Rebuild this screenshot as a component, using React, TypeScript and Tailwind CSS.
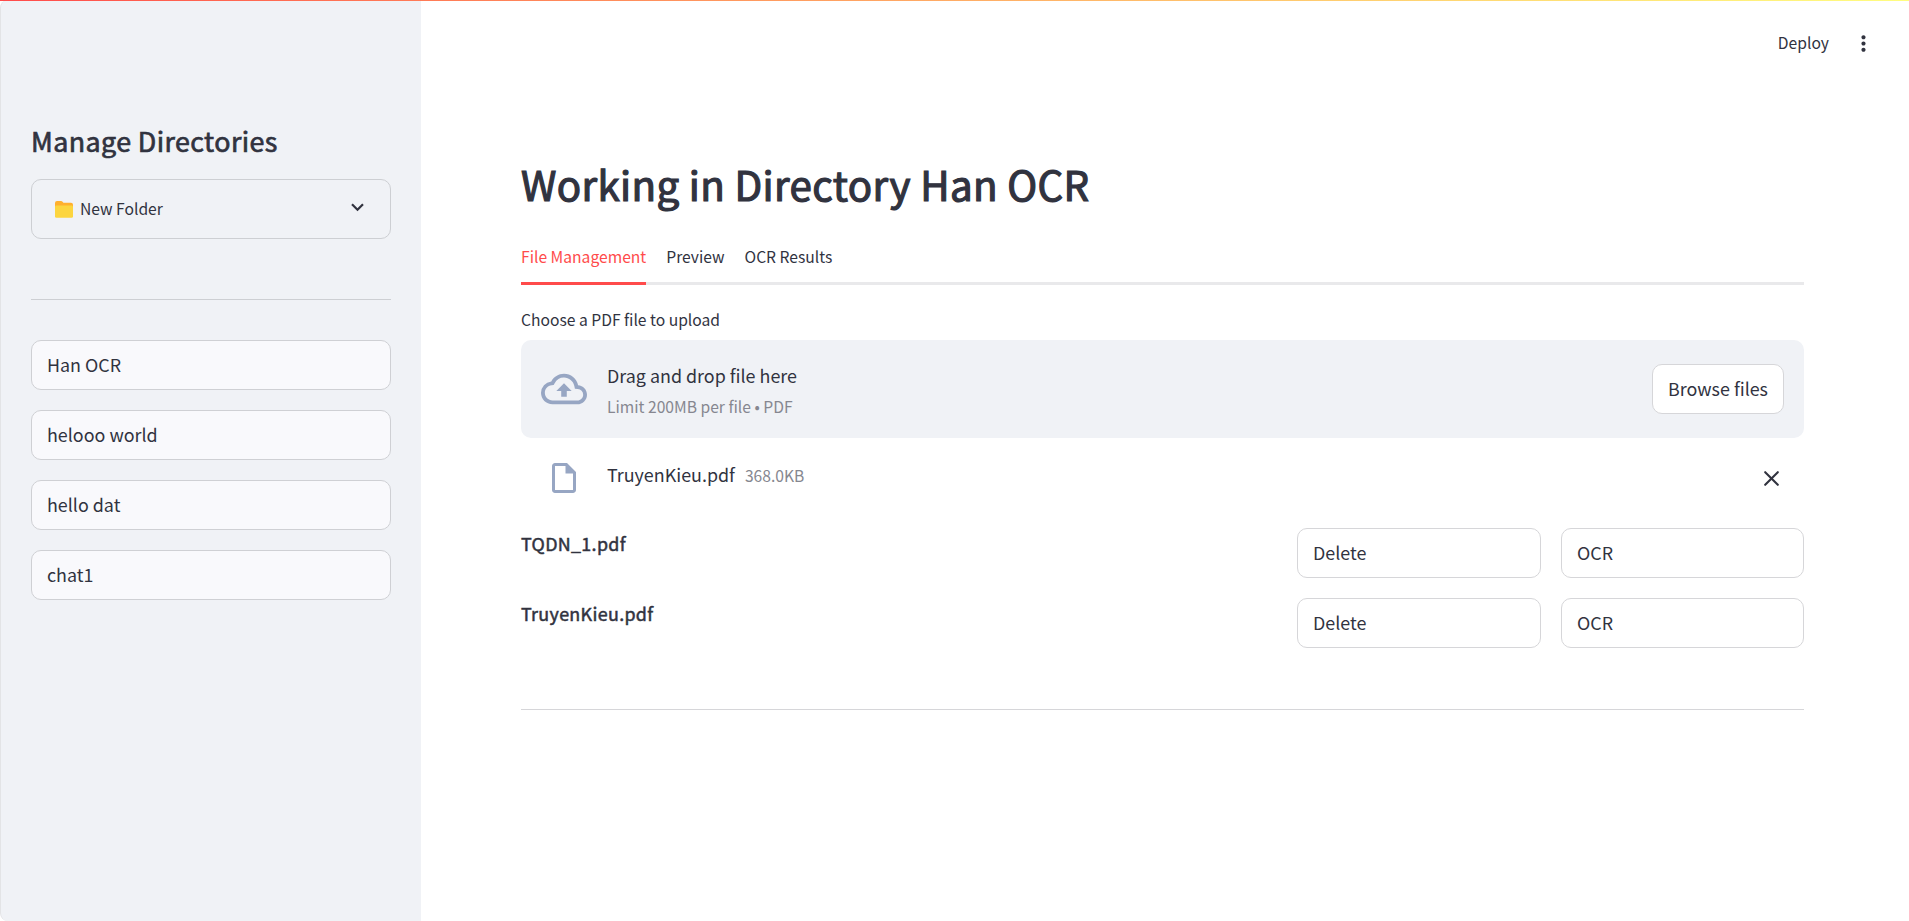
import { MdMoreVert, MdOutlineCloudUpload, MdOutlineInsertDriveFile } from "react-icons/md";

const directories = ["Han OCR", "helooo world", "hello dat", "chat1"];
const files = ["TQDN_1.pdf", "TruyenKieu.pdf"];
const tabs = ["File Management", "Preview", "OCR Results"];

function FolderIcon() {
  return (
    <svg width="18" height="17" viewBox="0 0 18 17" className="block">
      <path d="M0 2Q0 0 2 0H6Q7 0 7.6 .8L8.4 1.8H16Q18 1.8 18 3.8V8H0Z" fill="#ffb02e" />
      <rect y="4.6" width="18" height="12.2" rx="1.4" fill="#fcd53f" />
    </svg>
  );
}

function Button({ label, className }: { label: string; className: string }) {
  return (
    <button className={`flex h-[50px] items-center rounded-[10px] border px-[15px] pb-[3px] text-left ${className}`}>
      {label}
    </button>
  );
}

export default function App() {
  return (
    <div className="flex h-[921px] w-full overflow-hidden bg-white font-['Noto_Sans_CJK_JP','Source_Sans_Pro',sans-serif] text-[17.9px] leading-8 text-[#31333f]">
      <div className="absolute top-0 left-0 z-10 h-px w-full bg-linear-to-r from-[#ff4b4b] to-[#fffd80]" />
      <aside className="h-full w-[421px] shrink-0 rounded-l-lg border-l border-[#e3e4e6] bg-[#f0f2f6] pt-[121px] pr-[30px] pl-[30px]">
        <h2 className="h-[58px] text-[26.85px] leading-[39px] tracking-[0.015em] [-webkit-text-stroke:0.7px_#31333f]">
          Manage Directories
        </h2>
        <div className="flex h-[60px] items-center rounded-[10px] border border-[#cdcfd3] pr-[26px] pl-[23px] text-[15.65px]">
          <FolderIcon />
          <span className="ml-[7px] flex-1">New Folder</span>
          <svg width="13" height="9" viewBox="0 0 13 9" className="mb-1" fill="none" stroke="#31333f" strokeWidth="2.2">
            <path d="M1 1.2 6.5 6.8 12 1.2" />
          </svg>
        </div>
        <hr className="mt-[60px] border-[#cdcfd3]" />
        <div className="mt-10 flex flex-col gap-5">
          {directories.map((name) => (
            <Button key={name} label={name} className="border-[#cfd0d4] bg-[#f9f9fc]" />
          ))}
        </div>
      </aside>

      <main className="flex-1 pr-[105px] pl-[100px]">
        <header className="-mr-[105px] flex h-[86px] items-center justify-end pr-[33px] text-[15.65px]">
          <span className="mr-[22px]">Deploy</span>
          <MdMoreVert size={25} />
        </header>
        <h1 className="mt-[65px] h-[89px] text-[40.3px] leading-[66px] tracking-[0.0085em] [-webkit-text-stroke:1.2px_#31333f]">
          Working in Directory Han OCR
        </h1>
        <nav className="flex h-[45px] gap-5 border-b-[3px] border-[#e9e9eb] text-[15.65px] leading-[34px]">
          {tabs.map((tab, i) => (
            <span
              key={tab}
              className={i === 0 ? "h-[45px] border-b-[3px] border-[#ff4b4b] text-[#ff4b4b]" : "h-[45px]"}
            >
              {tab}
            </span>
          ))}
        </nav>
        <div className="mt-[19px] h-9 text-[15.65px]">Choose a PDF file to upload</div>
        <section className="flex h-[98px] items-center rounded-[10px] bg-[#f0f2f6] px-5">
          <MdOutlineCloudUpload size={46} color="#97a6c3" />
          <div className="ml-5 flex-1 pt-[3px] leading-[31px]">
            <div>Drag and drop file here</div>
            <div className="text-[15.65px] text-[#868790]">Limit 200MB per file • PDF</div>
          </div>
          <Button label="Browse files" className="border-[#d6d6d9] bg-white" />
        </section>
        <div className="mb-[10px] flex h-20 items-center pr-[25px] pl-[25px]">
          <MdOutlineInsertDriveFile size={36} color="#97a6c3" />
          <div className="ml-[25px] flex flex-1 items-baseline gap-[10px] pb-[6px]">
            <span>TruyenKieu.pdf</span>
            <span className="text-[15.65px] text-[#868790]">368.0KB</span>
          </div>
          <svg width="15" height="15" viewBox="0 0 15 15" stroke="#31333f" strokeWidth="2.1" strokeLinecap="round">
            <path d="M1.2 1.2 13.8 13.8M13.8 1.2 1.2 13.8" />
          </svg>
        </div>
        <div className="flex flex-col gap-5">
          {files.map((name) => (
            <div key={name} className="flex gap-5">
              <span className="flex-1 leading-[30px] tracking-[0.018em] [-webkit-text-stroke:0.5px_#31333f]">{name}</span>
              <Button label="Delete" className="w-[244px] border-[#d6d6d9] bg-white" />
              <Button label="OCR" className="w-[243px] border-[#d6d6d9] bg-white" />
            </div>
          ))}
        </div>
        <hr className="mt-[61px] border-[#d6d6d9]" />
      </main>
    </div>
  );
}
